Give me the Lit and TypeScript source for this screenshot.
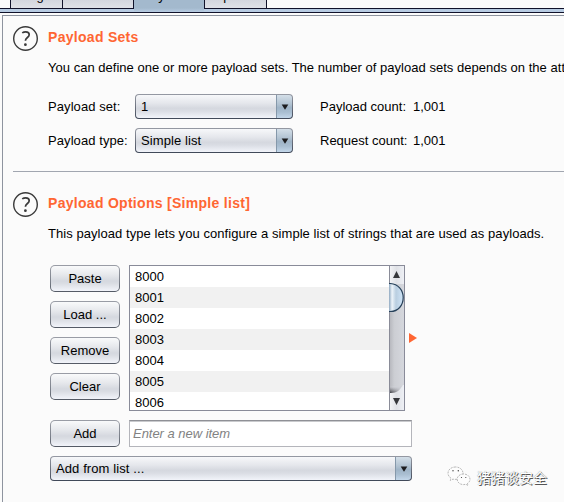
import { LitElement, html, css } from "lit";
import { customElement, property } from "lit/decorators.js";

@customElement("help-icon")
class HelpIcon extends LitElement {
  static styles = css`
    :host { display: block; width: 26px; height: 26px; }
    svg { display: block; }
  `;
  render() {
    return html`<svg width="26" height="26" viewBox="0 0 26 26" fill="none" stroke="#3a3a3a">
      <circle cx="12.5" cy="12.5" r="11.8" stroke-width="1.4" />
      <path d="M9.2 6.9C10.3 6.1 11.5 5.8 12.7 5.8C14.9 5.8 16.2 6.9 16.2 8.7C16.2 11.5 12.4 11.5 12.4 14.8" stroke-width="1.7" />
      <circle cx="12.4" cy="18.7" r="1.4" fill="#3a3a3a" stroke="none" />
    </svg>`;
  }
}

@customElement("combo-box")
class ComboBox extends LitElement {
  @property() value = "";
  static styles = css`
    :host { display: block; height: 25px; }
    .box {
      display: flex; box-sizing: border-box; height: 25px; border-radius: 4px; padding: 1px;
      background: linear-gradient(#9599a3, #656b78 60%, #3f4858);
    }
    .value {
      flex: 1; padding-left: 5px; line-height: 23px; border-radius: 3px 0 0 3px; white-space: pre; letter-spacing: 0.1px;
      background: linear-gradient(#f7f8fa, #e5e7ec 35%, #d5d8df 58%, #dadde4 70%, #f2f4fa);
    }
    .arrow {
      width: 16px; display: flex; align-items: center; justify-content: center;
      border-radius: 0 3px 3px 0; border-left: 1px solid #8598aa; box-sizing: border-box;
      background: linear-gradient(#d4dfe8, #b1c2d1 40%, #9fb4c7 55%, #a9bed1 75%, #c3d7ea);
    }
  `;
  render() {
    return html`<div class="box"><div class="value">${this.value}</div>
      <div class="arrow"><svg width="8" height="6" viewBox="0 0 8 6"><path d="M0.7 0.5H7.3L4 5.8Z" fill="#1c1c1e" /></svg></div></div>`;
  }
}

@customElement("push-button")
class PushButton extends LitElement {
  @property() label = "";
  static styles = css`
    :host { display: block; width: 70px; height: 27px; }
    .edge { height: 27px; box-sizing: border-box; padding: 1px; border-radius: 5px; background: linear-gradient(#9a9da6, #7b808a 60%, #535964); }
    .face {
      height: 25px; line-height: 26px; text-align: center; border-radius: 4px;
      background: linear-gradient(#f9fafb, #e6e8ec 35%, #d5d8df 60%, #dadde3 70%, #f2f4fa);
    }
  `;
  render() {
    return html`<div class="edge"><div class="face">${this.label}</div></div>`;
  }
}

@customElement("list-scrollbar")
class ListScrollbar extends LitElement {
  static styles = css`:host { display: block; width: 15px; height: 144px; } svg { display: block; }`;
  render() {
    return html`<svg width="15" height="144" viewBox="0 0 15 144">
      <defs>
        <linearGradient id="track"><stop offset="0" stop-color="#b3b4ba" /><stop offset=".35" stop-color="#ccced3" /><stop offset="1" stop-color="#d5d7dd" /></linearGradient>
        <linearGradient id="cap"><stop offset="0" stop-color="#f5f6f8" /><stop offset=".5" stop-color="#dfe1e6" /><stop offset="1" stop-color="#eef0f5" /></linearGradient>
        <linearGradient id="thumb"><stop offset="0" stop-color="#8fa8c0" /><stop offset=".22" stop-color="#edf4fa" /><stop offset=".5" stop-color="#b9cee0" /><stop offset="1" stop-color="#d0e5f8" /></linearGradient>
        <linearGradient id="shade" x2="0" y2="1"><stop offset="0" stop-color="#55565c" stop-opacity="0" /><stop offset="1" stop-color="#303136" /></linearGradient>
        <linearGradient id="fade"><stop offset="0" stop-color="#cfd1d7" stop-opacity="0" /><stop offset=".9" stop-color="#cfd1d7" /></linearGradient>
      </defs>
      <rect width="15" height="144" fill="url(#track)" />
      <rect y="121" width="15" height="6" fill="url(#shade)" />
      <rect y="120" width="15" height="7" fill="url(#fade)" />
      <rect width="15" height="18" fill="url(#cap)" />
      <path d="M0 127H2C8 127 11 124 14 119H15V144H0Z" fill="url(#cap)" />
      <path d="M0 17.5H2C9 18 14 24 14 31.5C14 39.5 9 45 2 45.5H0Z" fill="url(#thumb)" />
      <path d="M0 17.5H1.5C9 18 14.2 24 14.2 31.5C14.2 39.5 9 45.5 1.5 45.5H0" fill="none" stroke="#26415a" stroke-width="1.2" />
      <path d="M4 12L7.5 5L11 12Z M4 132L7.5 139L11 132Z" fill="#35373b" />
      <path d="M.5 0V17M.5 46V144" stroke="#8a8c98" />
    </svg>`;
  }
}

@customElement("app-root")
class AppRoot extends LitElement {
  static styles = css`
    :host {
      display: block; position: relative; width: 564px; height: 502px; overflow: hidden; background: #fbfbfb; color: #000;
      font: 13px/16px "Liberation Sans", "Noto Sans CJK SC", sans-serif; white-space: nowrap;
    }
    .tabs { display: flex; height: 8px; padding-left: 10px; }
    .tab {
      box-sizing: border-box; height: 8px; border-left: 1px solid #10122a; overflow: hidden;
      display: flex; justify-content: center; align-items: flex-end; background: linear-gradient(#d3d6de, #dfe1e7);
    }
    .tab span { margin-bottom: 4px; line-height: 16px; }
    .t0 { width: 52px; } .t1 { width: 71px; } .t2 { width: 71px; } .t3 { width: 63px; border-right: 1px solid #10122a; }
    .active { background: #a3b9cd; }
    .bar { box-sizing: border-box; display: flex; height: 5px; border-bottom: 1px solid #10122a; background: #b7cbe2; }
    .bar i { height: 1px; background: #10122a; }
    .bar .left { width: 134px; } .bar .right { flex: 1; }
    .bar .joint { width: 70px; height: 4px; background: linear-gradient(#a3b9cd, #b7cbe2); }
    .panel { box-sizing: border-box; margin: 2px 0 0 2px; height: 487px; border: solid #8e949f; border-width: 1px 0 0 1px; padding: 10px 0 0 10px; }
    .head { display: flex; height: 26px; }
    .head h2 { margin: 3px 0 0 9px; font-size: 14px; line-height: 16px; letter-spacing: 0.29px; color: #ff6633; }
    .desc { margin: 8px 0 0 35px; height: 16px; letter-spacing: 0.055px; }
    .intro { letter-spacing: 0.02px; }
    .grid { display: grid; grid-template-columns: 87px 158px 27px 93px auto; row-gap: 9px; margin: 18px 0 0 35px; line-height: 25px; }
    .label { letter-spacing: 0.08px; }
    .count { grid-column: 4; }
    .rule { height: 1px; background: #a1a6b0; margin: 18px 0 20px; }
    .work { display: flex; margin: 23px 0 0 37px; }
    .buttons { display: flex; flex-direction: column; gap: 9px; width: 70px; }
    .list { box-sizing: border-box; display: flex; width: 276px; height: 146px; margin-left: 9px; border: 1px solid #898b99; }
    .items { flex: 1; overflow: hidden; background: #fff; }
    .item { height: 21px; line-height: 22px; padding-left: 5px; }
    .item:nth-child(even) { background: #f1f1f1; }
    .marker { margin: 68px 0 0 4px; }
    .adder { display: flex; gap: 9px; margin: 9px 0 9px 37px; }
    .field {
      box-sizing: border-box; width: 283px; height: 27px; padding-left: 3px; line-height: 25px; background: #fff;
      border: 1px solid #b4b5bb; border-top-color: #8f9096; box-shadow: inset 0 1px 0 #c9cacd;
      font-style: italic; color: #828282; letter-spacing: -0.03px;
    }
    .from { width: 362px; margin-left: 37px; }
    .mark { position: absolute; left: 447px; top: 466px; display: flex; align-items: center; gap: 6px; }
    .mark span { font: 14px/20px "Noto Sans CJK SC", sans-serif; color: #fff; text-shadow: 1px 1px 0 #555, 0 0 1px #777; }
  `;

  render() {
    const tabs = ["Target", "Positions", "Payloads", "Options"];
    return html`
      <div class="tabs">${tabs.map((t, i) => html`<div class="tab t${i} ${i === 2 ? "active" : ""}"><span>${t}</span></div>`)}</div>
      <div class="bar"><i class="left"></i><i class="joint"></i><i class="right"></i></div>
      <div class="panel">
        <div class="head"><help-icon></help-icon><h2>Payload Sets</h2></div>
        <div class="desc intro">You can define one or more payload sets. The number of payload sets depends on the attack type</div>
        <div class="grid">
          <span class="label">Payload set:</span><combo-box value="1"></combo-box><span class="count">Payload count:</span><span>1,001</span>
          <span class="label">Payload type:</span><combo-box value="Simple list"></combo-box><span class="count">Request count:</span><span>1,001</span>
        </div>
        <div class="rule"></div>
        <div class="head"><help-icon></help-icon><h2>Payload Options [Simple list]</h2></div>
        <div class="desc">This payload type lets you configure a simple list of strings that are used as payloads.</div>
        <div class="work">
          <div class="buttons">${["Paste", "Load ...", "Remove", "Clear"].map((l) => html`<push-button label=${l}></push-button>`)}</div>
          <div class="list">
            <div class="items">${[0, 1, 2, 3, 4, 5, 6].map((n) => html`<div class="item">${8000 + n}</div>`)}</div>
            <list-scrollbar></list-scrollbar>
          </div>
          <svg class="marker" width="8" height="10" viewBox="0 0 8 10"><path d="M0 0L8 5L0 10Z" fill="#ff6633" /></svg>
        </div>
        <div class="adder"><push-button label="Add"></push-button><div class="field">Enter a new item</div></div>
        <combo-box class="from" value="Add from list ..."></combo-box>
      </div>
      <div class="mark">
        <svg width="24" height="21" viewBox="0 0 24 21" fill="#fdfdfd" stroke="#888" stroke-width=".6" stroke-dasharray="2 1">
          <path d="M8.5 1C4.2 1 1 3.7 1 7.2C1 9.3 2.1 11 4 12.2L3.3 14.4L6 13.1C7 13.4 8 13.4 9 13.3C13 13 16 10.5 16 7.2C16 3.7 12.7 1 8.5 1Z" />
          <path d="M16.5 8C12.9 8 10.2 10.3 10.2 13.3C10.2 16.3 12.9 18.6 16.5 18.6C17.3 18.6 18 18.5 18.8 18.2L21 19.5L20.5 17.4C22 16.4 23 15 23 13.3C23 10.3 20.2 8 16.5 8Z" />
          <g fill="#444" stroke="none"><circle cx="6" cy="4.7" r=".7" /><circle cx="11.3" cy="4.7" r=".7" /><circle cx="14.5" cy="11.5" r=".6" /><circle cx="18.8" cy="11.5" r=".6" /></g>
        </svg>
        <span>猪猪谈安全</span>
      </div>`;
  }
}
